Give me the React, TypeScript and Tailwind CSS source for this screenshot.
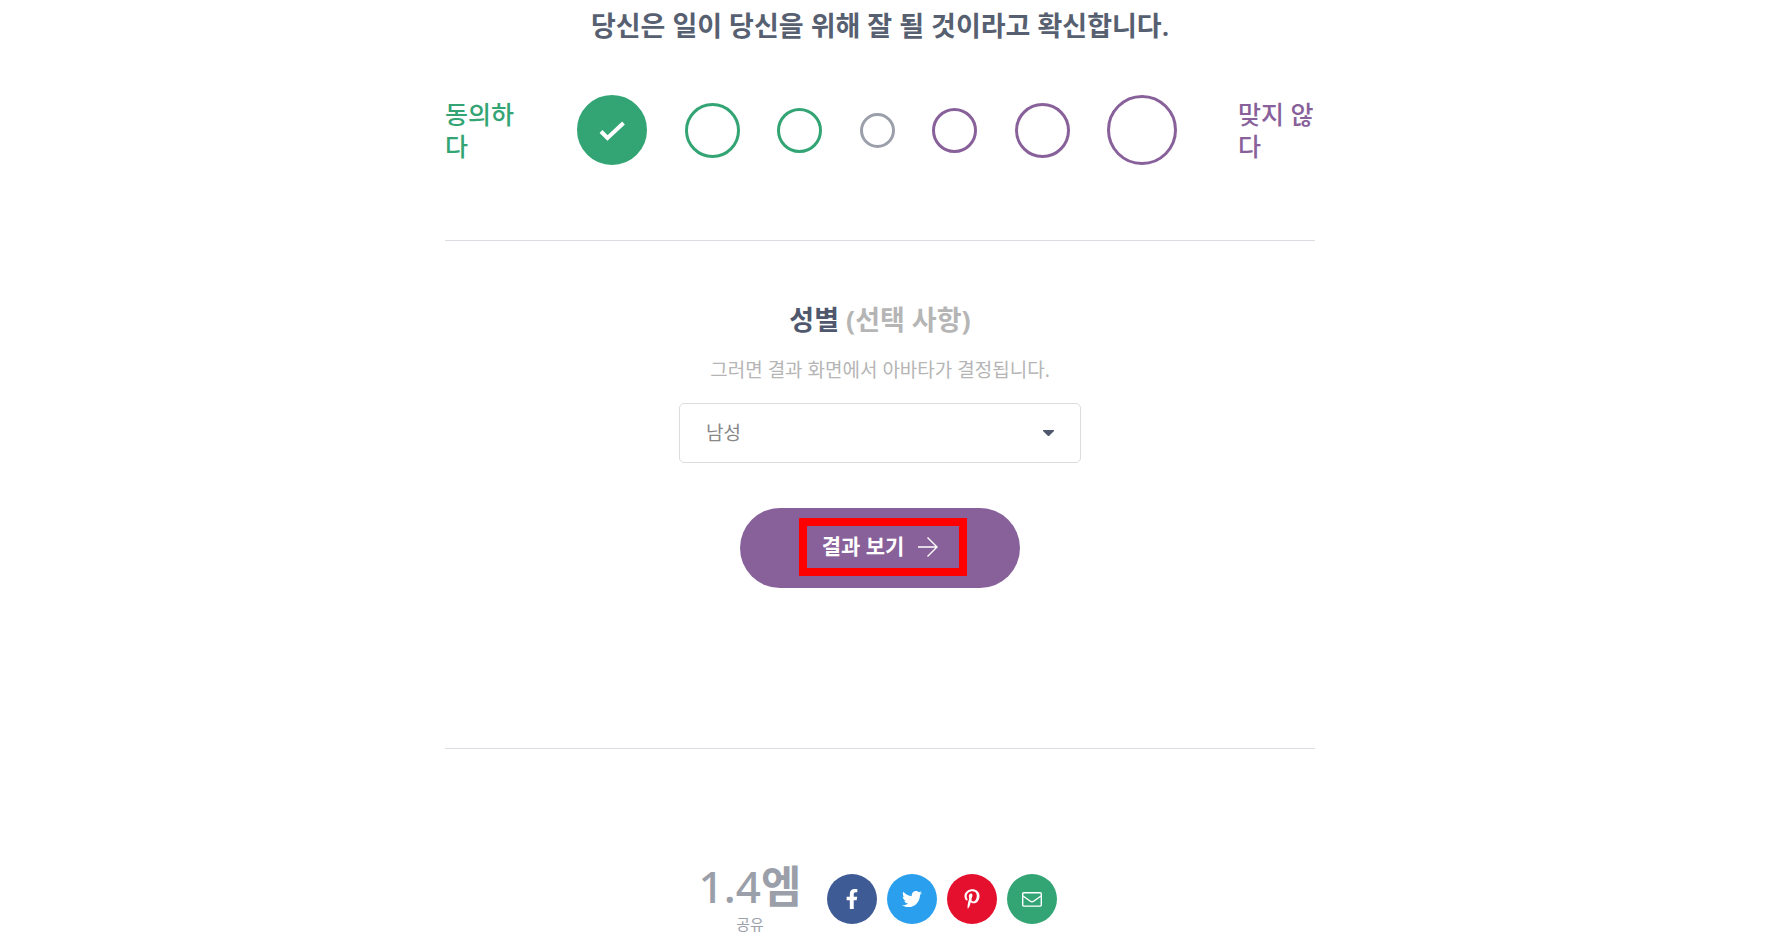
import React, { useState } from 'react';
import { FaFacebookF, FaTwitter, FaPinterestP } from 'react-icons/fa';

type Option = { value: number; label: string; className: string };

const options: Option[] = [
    { value: 3, label: '매우 동의', className: 'size-[70px] border-[#33a474] checked:bg-[#33a474]' },
    { value: 2, label: '동의', className: 'size-[55px] border-[#33a474] checked:bg-[#33a474]' },
    { value: 1, label: '약간 동의', className: 'size-[45px] border-[#33a474] checked:bg-[#33a474]' },
    { value: 0, label: '중립', className: 'size-[35px] border-[#9b9faa] checked:bg-[#9b9faa]' },
    { value: -1, label: '약간 반대', className: 'size-[45px] border-[#88619a] checked:bg-[#88619a]' },
    { value: -2, label: '반대', className: 'size-[55px] border-[#88619a] checked:bg-[#88619a]' },
    { value: -3, label: '매우 반대', className: 'size-[70px] border-[#88619a] checked:bg-[#88619a]' },
];

const MailIcon = () => (
    <svg width="20" height="15" viewBox="0 0 20 15" fill="none" stroke="currentColor" strokeWidth="1.4">
        <rect x="0.7" y="0.7" width="18.6" height="13.4" rx="1" />
        <path d="M1 4l7.4 5.3c1 .7 2.2.7 3.2 0L19 4" />
    </svg>
);

const socials = [
    { name: 'Facebook', className: 'bg-[#3f5b95]', icon: <FaFacebookF size={20} /> },
    { name: 'Twitter', className: 'bg-[#2a9fee]', icon: <FaTwitter size={20} /> },
    { name: 'Pinterest', className: 'bg-[#e4102d]', icon: <FaPinterestP size={20} /> },
    { name: 'Email', className: 'bg-[#33a474]', icon: <MailIcon /> },
];

const Question = () => {
    const [answer, setAnswer] = useState(3);

    return (
        <fieldset className="border-b border-[#dcdde3] pb-[75px]">
            <legend className="w-full text-center text-[27px] leading-[52px] font-semibold text-[#576071]">
                당신은 일이 당신을 위해 잘 될 것이라고 확신합니다.
            </legend>
            <div className="mt-[43px] flex items-center justify-between text-[25px] leading-8 font-medium">
                <span className="w-[71px] break-all text-[#33a474]">동의하다</span>
                <div className="flex w-[600px] items-center justify-between">
                    {options.map(option => (
                        <span key={option.value} className="relative flex">
                            <input
                                type="radio"
                                name="answer"
                                aria-label={option.label}
                                checked={answer === option.value}
                                onChange={() => setAnswer(option.value)}
                                className={`cursor-pointer appearance-none rounded-full border-3 ${option.className}`}
                            />
                            {answer === option.value && (
                                <svg
                                    className="pointer-events-none absolute inset-0 m-auto"
                                    width="26"
                                    height="22"
                                    viewBox="0 0 26 22"
                                    fill="none"
                                    stroke="white"
                                    strokeWidth="4"
                                >
                                    <path d="M2 12.5l6.5 6.5L24.5 4" />
                                </svg>
                            )}
                        </span>
                    ))}
                </div>
                <span className="w-[77px] break-all text-[#88619a]">맞지 않다</span>
            </div>
        </fieldset>
    );
};

const ResultForm = () => (
    <form
        className="flex flex-col items-center border-b border-[#dcdde3] pt-[59px] pb-40"
        onSubmit={e => e.preventDefault()}
    >
        <label htmlFor="gender" className="text-[27px] leading-10 font-bold text-[#4f586d]">
            성별 <span className="text-[#b5b5b5]">(선택 사항)</span>
        </label>
        <p className="mt-4 text-[19px] leading-7 text-[#b5b5b5]">
            그러면 결과 화면에서 아바타가 결정됩니다.
        </p>
        <div className="relative mt-[19px] w-full max-w-[402px]">
            <select
                id="gender"
                defaultValue="male"
                className="h-[60px] w-full appearance-none rounded-[5px] border border-[#dddddd] bg-white px-[26px] text-[19px] text-[#888888]"
            >
                <option value="male">남성</option>
                <option value="female">여성</option>
            </select>
            <svg
                className="pointer-events-none absolute inset-y-0 right-[27px] my-auto"
                width="11"
                height="6"
                viewBox="0 0 11 6"
                fill="#4f586d"
            >
                <path d="M0 0h11v1L6.5 5.5q-1 1-2 0L0 1z" />
            </svg>
        </div>
        <button
            type="submit"
            className="mt-[45px] flex h-20 w-[280px] items-center justify-center rounded-full bg-[#88619a] pb-0.5 pl-1.5 text-white"
        >
            <span className="flex h-[58px] w-[168px] items-center justify-center gap-3.5 border-8 border-[#ff0000] pr-1.5 text-[21px] font-bold">
                결과 보기
                <svg width="20" height="20" viewBox="0 0 20 20" fill="none" stroke="currentColor" strokeWidth="1.4">
                    <path d="M0 10h19M9.5 0.5L19 10l-9.5 9.5" />
                </svg>
            </span>
        </button>
    </form>
);

const Share = () => (
    <section className="flex items-center justify-center gap-[26px] pt-[109px] pr-1">
        <div className="flex flex-col items-center pb-1.5 text-[#9b9faa]">
            <span className="text-[44px] leading-[56px] font-medium">
                1.4<b>엠</b>
            </span>
            <span className="text-[15px] leading-5">공유</span>
        </div>
        <ul className="flex gap-2.5">
            {socials.map(social => (
                <li key={social.name}>
                    <a
                        href="#"
                        aria-label={social.name}
                        className={`flex size-[50px] items-center justify-center rounded-full text-white ${social.className}`}
                    >
                        {social.icon}
                    </a>
                </li>
            ))}
        </ul>
    </section>
);

export default function App() {
    return (
        <main className="bg-white pr-[21px] font-['Noto_Sans','Noto_Sans_CJK_KR',sans-serif]">
            <div className="mx-auto max-w-[870px]">
                <Question />
                <ResultForm />
                <Share />
            </div>
        </main>
    );
}
